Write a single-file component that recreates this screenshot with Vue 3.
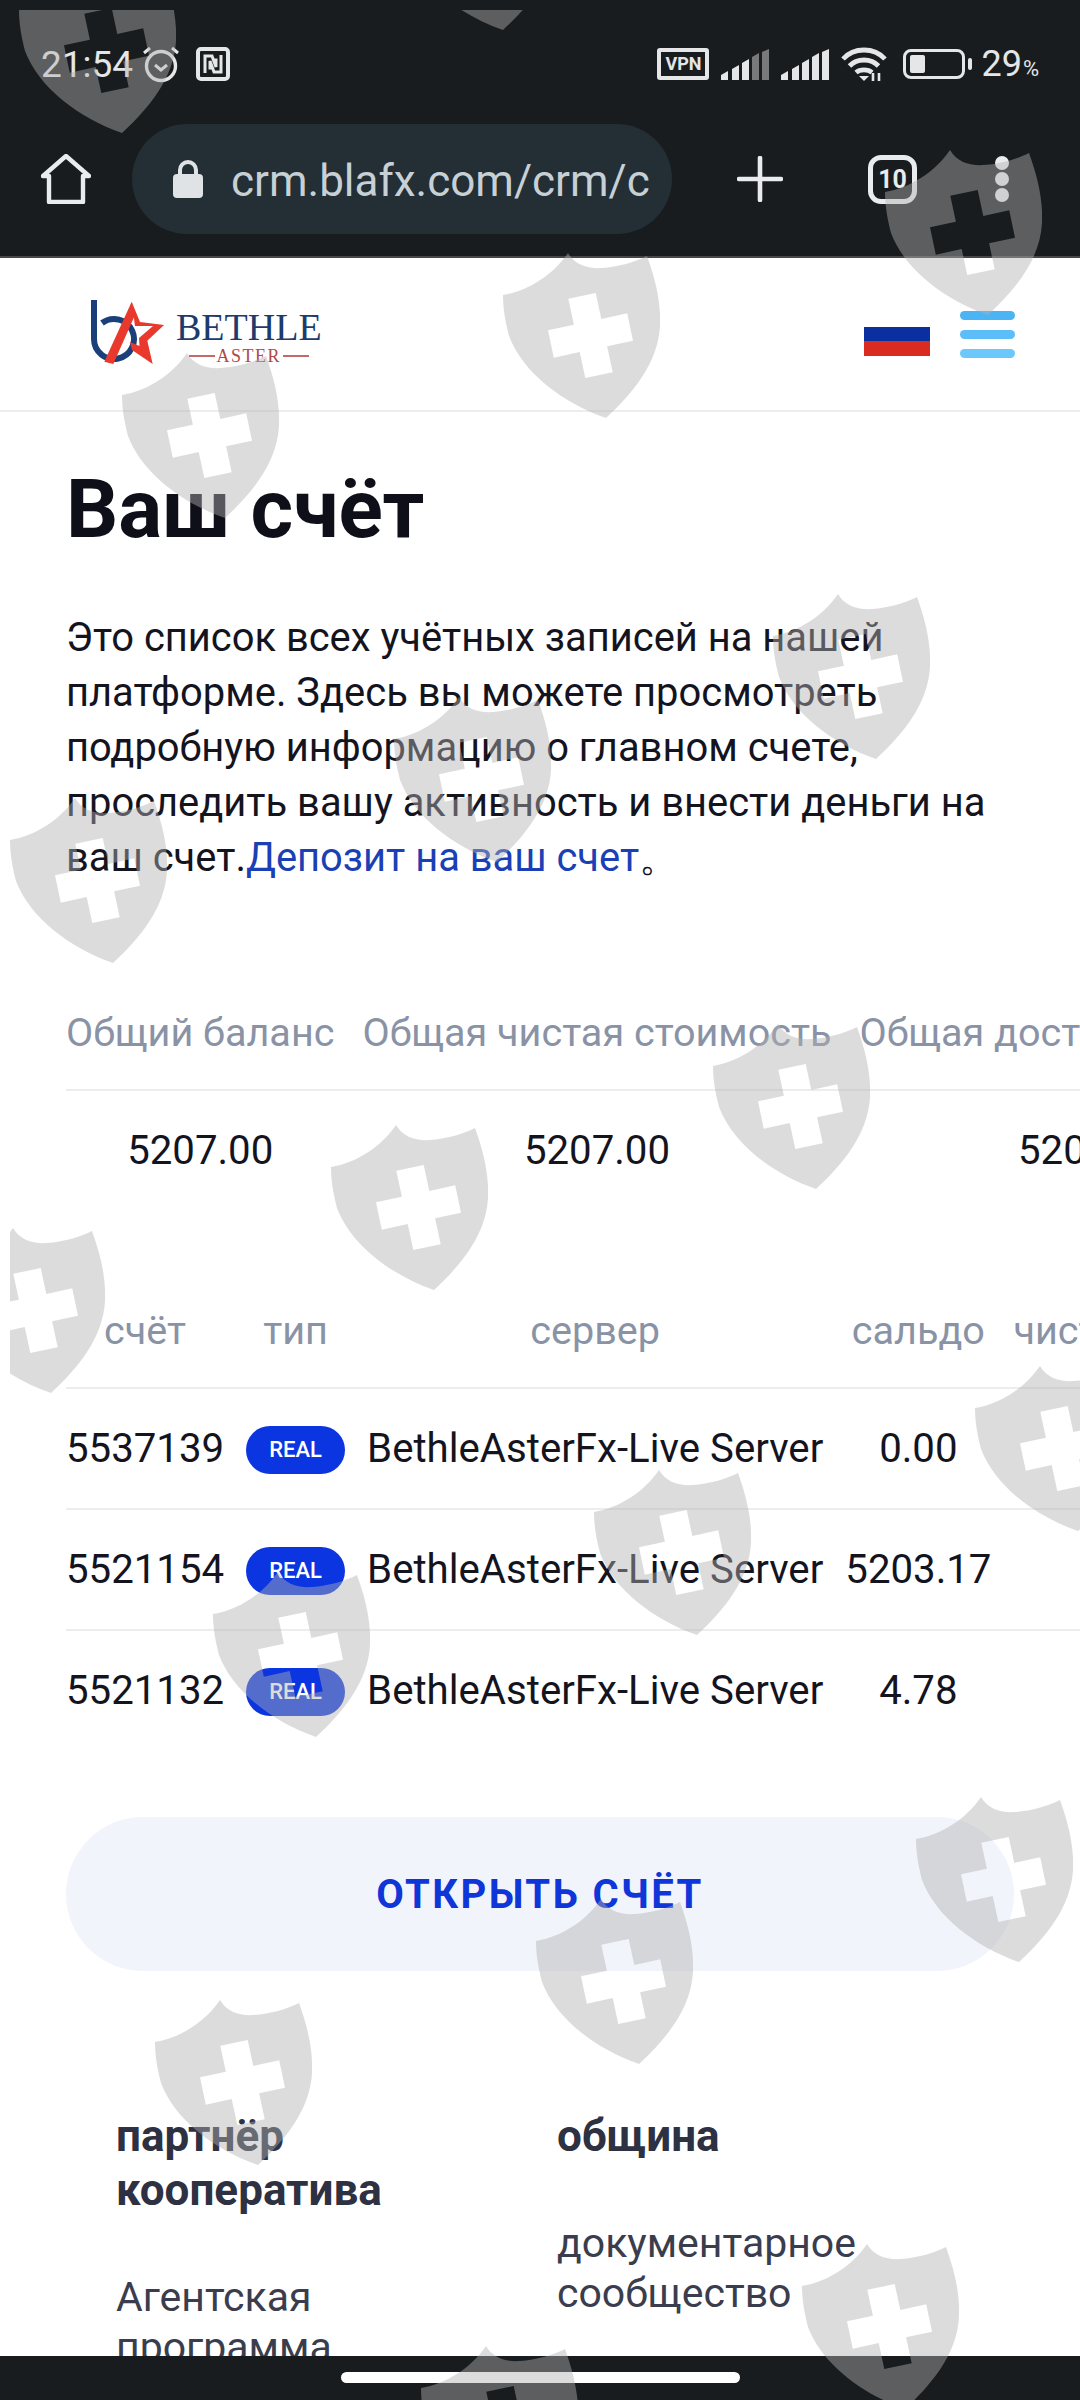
<template>
  <div class="screen">
    <header class="chrome">
      <div class="status-bar">
        <div class="status-left">
          <span class="time">21:54</span>
          <svg class="alarm" viewBox="0 0 38 38" fill="none" stroke="#e4e6e7">
            <circle cx="19" cy="21" r="14.5" stroke-width="3.4" />
            <path d="M13 20l6 5 6-5" stroke-width="3" />
            <path d="M2 8l6-5M36 8l-6-5" stroke-width="3" />
          </svg>
          <svg class="nfc" viewBox="0 0 34 34">
            <rect x="2" y="2" width="30" height="30" rx="3" fill="none" stroke="#e4e6e7" stroke-width="4" />
            <path d="M9 26V9h7l4 11V13h-3M25 8v17h-7l-4-11v7h3" fill="none" stroke="#e4e6e7" stroke-width="3" />
          </svg>
        </div>
        <div class="status-right">
          <span class="vpn">VPN</span>
          <svg class="signal" viewBox="0 0 48 31">
            <path d="M0 31v-5l7-4v9z" fill="#e4e6e7" />
            <path d="M11 31V20l7-4v15z" fill="#e4e6e7" />
            <path d="M21 31V14l7-4v21z" fill="#e4e6e7" />
            <path d="M31 31V8l7-4v27z" fill="#77797b" />
            <path d="M41 31V3l7-3v31z" fill="#77797b" />
          </svg>
          <svg class="signal" viewBox="0 0 48 31">
            <path d="M0 31v-5l7-4v9z" fill="#e4e6e7" />
            <path d="M11 31V20l7-4v15z" fill="#e4e6e7" />
            <path d="M21 31V14l7-4v21z" fill="#e4e6e7" />
            <path d="M31 31V8l7-4v27z" fill="#e4e6e7" />
            <path d="M41 31V3l7-3v31z" fill="#e4e6e7" />
          </svg>
          <svg class="wifi" viewBox="0 0 46 35" fill="none" stroke="#e4e6e7" stroke-width="4.8">
            <path d="M2 12C13 0 33 0 44 12" />
            <path d="M8.5 19C16 11 30 11 37.500 19" />
            <path d="M15 25.500C19 22 27 22 31 25.500" />
            <path d="M23 34l-5-5h10z" fill="#e4e6e7" stroke="none" />
            <path d="M32 26v8M38 26v8" stroke-width="2.600" />
          </svg>
          <div class="battery">
            <div class="battery-level"></div>
          </div>
          <span class="battery-nub"></span>
          <span class="percent">29<small>%</small></span>
        </div>
      </div>
      <div class="toolbar">
        <svg class="home" viewBox="0 0 50 50" fill="none" stroke="#e9ebec" stroke-width="4.4">
          <path d="M2 22L25 2l23 20h-6v26H8V22z" stroke-linejoin="round" />
        </svg>
        <div class="url-pill">
          <svg class="lock" viewBox="0 0 32 38">
            <path d="M8 16V10a8 8 0 0 1 16 0v6" fill="none" stroke="#dfe3e5" stroke-width="4" />
            <rect x="1" y="14" width="30" height="24" rx="4" fill="#dfe3e5" />
          </svg>
          <span class="url">crm.blafx.com/crm/c</span>
        </div>
        <svg class="plus" viewBox="0 0 46 46" fill="none" stroke="#e9ebec" stroke-width="4.600" stroke-linecap="round">
          <path d="M23 2v42M2 23h42" />
        </svg>
        <span class="tabs">10</span>
        <div class="dots"><i></i><i></i><i></i></div>
      </div>
    </header>

    <div class="page">
      <div class="site-header">
        <div class="logo">
          <svg class="logo-mark" viewBox="0 0 84 72">
            <path d="M6 2v39a20 20 0 1 0 8-16" fill="none" stroke="#1b3f7a" stroke-width="6" />
            <polygon points="43.700,3.700 16.300,63.700 25.300,66 47,17" fill="#e8392c" />
            <polygon points="43.700,3.700 52,24 76,27 59.300,42.700 64.700,66 44,52 42,44 51.500,48 51,40 65,28 47,28" fill="#e8392c" />
          </svg>
          <div class="logo-text">
            <span class="logo-name">BETHLE</span>
            <span class="logo-sub"><i></i>ASTER<i></i></span>
          </div>
        </div>
        <div class="header-actions">
          <div class="flag"><i class="blue"></i><i class="red"></i></div>
          <div class="menu"><i></i><i></i><i></i></div>
        </div>
      </div>

      <main class="content">
        <h1>Ваш счёт</h1>
        <p class="intro">
          Это список всех учётных записей на нашей платформе. Здесь вы можете просмотреть подробную информацию о главном счете, проследить вашу активность и внести деньги на ваш счет.<a>Депозит на ваш счет</a>。
        </p>

        <div class="table-wrap summary">
          <table>
            <thead>
              <tr><th v-for="h in summaryHead" :key="h">{{ h }}</th></tr>
            </thead>
            <tbody>
              <tr><td v-for="(v, i) in summaryRow" :key="i">{{ v }}</td></tr>
            </tbody>
          </table>
        </div>

        <div class="table-wrap accounts">
          <table>
            <thead>
              <tr><th v-for="h in accountHead" :key="h">{{ h }}</th></tr>
            </thead>
            <tbody>
              <tr v-for="row in accounts" :key="row.id">
                <td>{{ row.id }}</td>
                <td><span class="badge">REAL</span></td>
                <td>{{ row.server }}</td>
                <td>{{ row.balance }}</td>
                <td>{{ row.net }}</td>
              </tr>
            </tbody>
          </table>
        </div>

        <button class="open-btn">ОТКРЫТЬ СЧЁТ</button>
      </main>

      <footer class="site-footer">
        <div class="foot-col">
          <h3>партнёр кооператива</h3>
          <a>Агентская программа</a>
        </div>
        <div class="foot-col">
          <h3>община</h3>
          <a>документарное сообщество</a>
        </div>
      </footer>
    </div>

    <div class="nav-bar"><span class="home-pill"></span></div>

    <div class="watermarks">
      <svg
        v-for="(s, i) in shields"
        :key="i"
        class="shield"
        viewBox="0 0 157 165"
        :style="{ left: s[0] - 10 + 'px', top: s[1] - 10 + 'px' }"
      >
        <path
          fill="#b1b1b1"
          fill-opacity="0.446"
          fill-rule="evenodd"
          d="M65 0C72 12 85 16 99 15C115 14 132 9 144 3C153 28 158 50 157 73C155 110 130 140 103 165C60 150 20 120 6 83C2 68 0 55 0 42C25 38 50 22 65 0Z
             M65.300 45.800L92.700 40L98.300 65.900L124.200 60.300L130 87.700L104.100 93.300L109.700 119.200L82.300 125L76.700 99.100L50.800 104.700L45 77.300L70.900 71.700Z"
        />
      </svg>
    </div>
  </div>
</template>

<script setup>
const summaryHead = ['Общий баланс', 'Общая чистая стоимость', 'Общая доступная маржа']
const summaryRow = ['5207.00', '5207.00', '5207.00']
const accountHead = ['счёт', 'тип', 'сервер', 'сальдо', 'чистая стоимость']
const accounts = [
  { id: '5537139', server: 'BethleAsterFx-Live Server', balance: '0.00', net: '0.00' },
  { id: '5521154', server: 'BethleAsterFx-Live Server', balance: '5203.17', net: '5203.17' },
  { id: '5521132', server: 'BethleAsterFx-Live Server', balance: '4.78', net: '4.78' }
]

// watermark tiles, left/top of each shield on the screen
const shields = [
  [19, -32], [400, -135], [885, 150], [503, 253], [122, 353],
  [773, 594], [394, 697], [10, 798], [713, 1024], [331, 1125],
  [-52, 1228], [975, 1366], [594, 1470], [213, 1572], [916, 1797],
  [536, 1899], [155, 2000], [802, 2244], [421, 2346]
]
</script>

<style>
html, body {
  margin: 0;
  background: #fff;
}
</style>

<style scoped>
.screen {
  position: relative;
  width: 1080px;
  height: 2400px;
  display: flex;
  flex-direction: column;
  overflow: hidden;
  font-family: Roboto, sans-serif;
  background: #fff;
}

/* browser chrome */
.chrome {
  flex: none;
  height: 256px;
  background: #181c1f;
  border-bottom: 2px solid #454749;
}

.status-bar {
  height: 128px;
  box-sizing: border-box;
  padding: 0 41px 0 41px;
  display: flex;
  justify-content: space-between;
  align-items: center;
}

.status-left,
.status-right {
  display: flex;
  align-items: center;
}

.time {
  font-size: 37px;
  color: #e4e6e7;
  width: 101px;
}

.alarm {
  width: 38px;
  height: 38px;
}

.nfc {
  width: 34px;
  height: 34px;
  margin-left: 16px;
}

.vpn {
  box-sizing: border-box;
  width: 52px;
  height: 32px;
  border: 4px solid #e4e6e7;
  border-radius: 3px;
  color: #e4e6e7;
  font-size: 18px;
  font-weight: 700;
  line-height: 24px;
  text-align: center;
}

.signal {
  width: 48px;
  height: 31px;
  margin-left: 12px;
}

.wifi {
  width: 46px;
  height: 35px;
  margin-left: 12px;
}

.battery {
  box-sizing: border-box;
  width: 62px;
  height: 30px;
  margin-left: 16px;
  padding: 3px 4px;
  border: 3px solid #e4e6e7;
  border-radius: 8px;
}

.battery-level {
  width: 15px;
  height: 100%;
  background: #e4e6e7;
  border-radius: 2px;
}

.battery-nub {
  width: 4px;
  height: 12px;
  margin-left: 3px;
  background: #e4e6e7;
  border-radius: 2px;
}

.percent {
  margin-left: 9px;
  font-size: 36px;
  color: #e4e6e7;
}

.percent small {
  font-size: 22px;
  margin-left: 1px;
}

.toolbar {
  display: flex;
  align-items: center;
  padding-left: 41px;
  height: 110px;
  margin-top: -4px;
}

.home {
  width: 50px;
  height: 50px;
}

.url-pill {
  width: 540px;
  height: 110px;
  margin-left: 41px;
  box-sizing: border-box;
  padding-left: 40px;
  display: flex;
  align-items: center;
  background: #232e35;
  border-radius: 55px;
  overflow: hidden;
}

.lock {
  flex: none;
  width: 32px;
  height: 38px;
}

.url {
  margin-left: 27px;
  padding-top: 4px;
  font-size: 44px;
  color: #c7d0d4;
  white-space: nowrap;
}

.plus {
  width: 46px;
  height: 46px;
  margin-left: 65px;
}

.tabs {
  box-sizing: border-box;
  width: 49px;
  height: 49px;
  margin-left: 85px;
  border: 5px solid #e9ebec;
  border-radius: 13px;
  color: #e9ebec;
  font-size: 25px;
  font-weight: 700;
  line-height: 39px;
  text-align: center;
}

.dots {
  margin-left: 78px;
  display: flex;
  flex-direction: column;
  gap: 2px;
}

.dots i {
  width: 14px;
  height: 14px;
  border-radius: 50%;
  background: #e9ebec;
}

/* page */
.page {
  flex: 1;
  min-height: 0;
  overflow: hidden;
}

.site-header {
  height: 152px;
  border-bottom: 2px solid #ededed;
  display: flex;
  justify-content: space-between;
  align-items: center;
  padding: 0 65px 0 88px;
}

.logo {
  display: flex;
  align-items: center;
}

.logo-mark {
  width: 84px;
  height: 72px;
}

.logo-text {
  margin-left: 4px;
  padding-top: 7px;
  display: flex;
  flex-direction: column;
  font-family: "Liberation Serif", serif;
}

.logo-name {
  font-size: 38px;
  line-height: 36px;
  color: #1c3c6e;
}

.logo-sub {
  display: flex;
  align-items: center;
  justify-content: center;
  gap: 2px;
  font-size: 18px;
  line-height: 22px;
  letter-spacing: 1.5px;
  color: #b0494a;
}

.logo-sub i {
  width: 26px;
  height: 2px;
  background: #c4696a;
}

.header-actions {
  display: flex;
  align-items: flex-start;
  gap: 30px;
}

.flag {
  width: 66px;
  margin-top: 13px;
  padding-top: 3px;
}

.flag i {
  display: block;
  height: 15px;
}

.flag .blue {
  background: #0a2fa0;
  height: 14px;
}

.flag .red {
  background: #d92b1f;
}

.menu {
  width: 55px;
  display: flex;
  flex-direction: column;
  gap: 10px;
}

.menu i {
  display: block;
  height: 9px;
  border-radius: 5px;
  background: #4ab4f5;
}

.menu i:nth-child(2) {
  background: #5cbdf8;
}

.menu i:nth-child(3) {
  background: #6cc8fb;
}

.content {
  padding: 0 0 0 66px;
}

h1 {
  margin: 47px 0 0;
  font-family: Roboto, sans-serif;
  font-size: 82px;
  line-height: 100px;
  font-weight: 700;
  color: #0f0f1a;
}

.intro {
  margin: 51px 0 0;
  width: 948px;
  font-size: 39.9px;
  line-height: 55px;
  color: #14141f;
}

.intro a {
  color: #1b3fb5;
}

.table-wrap {
  overflow: hidden;
  width: 1014px;
}

table {
  border-collapse: collapse;
  white-space: nowrap;
  font-size: 40.2px;
  color: #14141f;
}

th {
  font-size: 39.6px;
  font-weight: 400;
  color: #8a93a6;
  text-align: center;
  border-bottom: 2px solid #ededed;
  padding: 0 11px;
}

td {
  text-align: center;
  padding: 0 11px;
}

th:first-child,
td:first-child {
  padding-left: 0;
}

.summary {
  margin-top: 90px;
}

.summary th {
  height: 114px;
  padding: 0 14px;
}

.summary th:first-child,
.summary td:first-child {
  padding-left: 0;
}

.summary td {
  height: 119px;
  padding: 0 14px;
}

.accounts {
  margin-top: 63px;
}

.accounts th {
  height: 114px;
}

.accounts td {
  height: 119px;
}

.accounts tbody tr + tr td {
  border-top: 2px solid #ededed;
}

.badge {
  display: inline-block;
  width: 99px;
  height: 48px;
  border-radius: 24px;
  background: #0a35e0;
  color: #fff;
  font-size: 22px;
  font-weight: 500;
  line-height: 48px;
  text-align: center;
  vertical-align: middle;
}

.open-btn {
  display: block;
  width: 948px;
  height: 154px;
  margin-top: 67px;
  border: 0;
  border-radius: 77px;
  background: #f1f4fb;
  color: #0f36d8;
  font-family: Roboto, sans-serif;
  font-size: 40px;
  font-weight: 700;
  letter-spacing: 2.4px;
}

.site-footer {
  display: grid;
  grid-template-columns: 441px 400px;
  padding: 138px 0 0 116px;
}

.foot-col h3 {
  margin: 0;
  width: 300px;
  font-family: Roboto, sans-serif;
  font-size: 44px;
  line-height: 54px;
  font-weight: 700;
  color: #2d3142;
}

.foot-col a {
  display: block;
  width: 320px;
  margin-top: 55px;
  font-size: 41px;
  line-height: 50px;
  color: #3a3d4d;
}

.nav-bar {
  flex: none;
  height: 44px;
  background: #181c1f;
  display: flex;
  justify-content: center;
  align-items: flex-start;
}

.home-pill {
  width: 399px;
  height: 11px;
  margin-top: 16px;
  border-radius: 6px;
  background: #fff;
}

/* watermark tiles sit over the whole screen */
.watermarks {
  position: absolute;
  top: 10px;
  left: 10px;
  right: 0;
  bottom: 0;
  overflow: hidden;
  pointer-events: none;
}

.shield {
  position: absolute;
  width: 157px;
  height: 165px;
}
</style>
